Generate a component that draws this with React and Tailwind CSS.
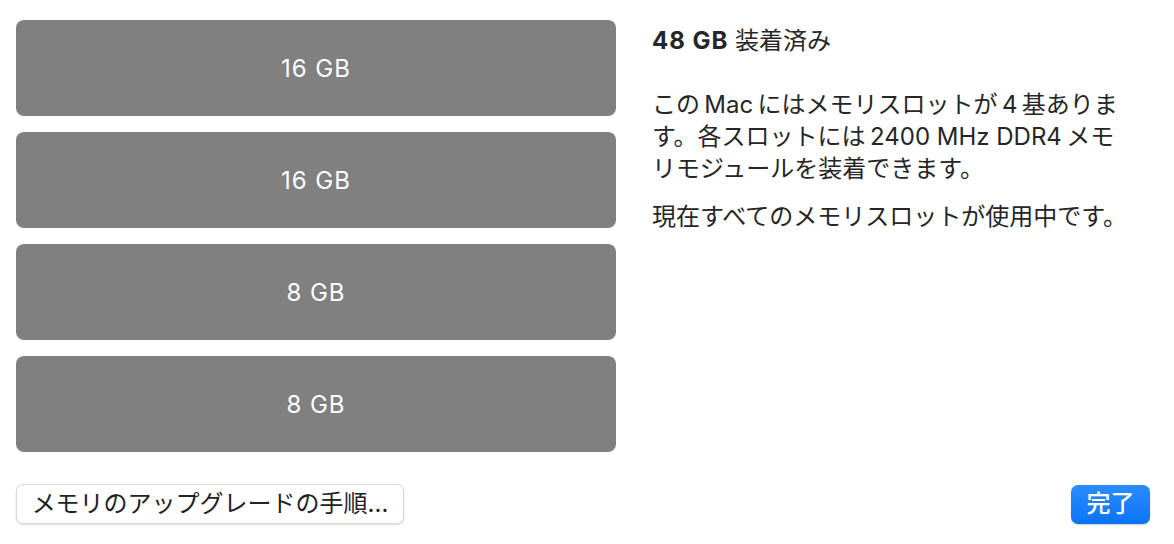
import React from "react";

const slots = ["16 GB", "16 GB", "8 GB", "8 GB"];

const font = { fontFamily: 'Inter, "Noto Sans CJK JP", sans-serif' };

export default function App() {
  return (
    <div className="w-[1174px] h-[544px] bg-white text-[#262626] flex flex-col" style={font}>
      <div className="flex pt-[20px] pl-[16px]">
        <div className="w-[600px] flex flex-col gap-4">
          {slots.map((s, i) => (
            <div key={i} className="h-[96px] rounded-[8px] bg-[#808080] flex items-center justify-center text-white text-[24px] tracking-[0.04em] pt-[2px]">
              {s}
            </div>
          ))}
        </div>
        <div className="ml-[36px] pt-[7px]">
          <div className="text-[24px] leading-[28px] whitespace-nowrap">
            <span className="font-bold tracking-[0.04em]">48 GB</span> 装着済み
          </div>
          <p className="mt-[34px] text-[24px] leading-[32px] whitespace-nowrap">
            この{"\u2009"}Mac{"\u2009"}にはメモリスロットが{"\u2009"}4{"\u2009"}基ありま<br />
            す。各スロットには{"\u2009"}2400 MHz DDR4{"\u2009"}メモ<br />
            リモジュールを装着できます。
          </p>
          <p className="mt-[16px] text-[24px] leading-[32px] whitespace-nowrap">現在すべてのメモリスロットが使用中です。</p>
        </div>
      </div>
      <div className="mt-[32px] flex items-center justify-between pl-[16px] pr-[24px]">
        <button className="h-[40px] w-[388px] rounded-[7px] bg-white border border-[#d9d9d9] shadow-[0_1px_2px_rgba(0,0,0,0.15)] text-[24px] leading-none text-[#222] whitespace-nowrap">
          メモリのアップグレードの手順...
        </button>
        <button className="h-[39px] w-[79px] rounded-[7px] bg-gradient-to-b from-[#2a8cff] to-[#0a74f5] text-white text-[24px] font-medium leading-none shadow-[0_1px_2px_rgba(0,0,0,0.2)]">
          完了
        </button>
      </div>
    </div>
  );
}
